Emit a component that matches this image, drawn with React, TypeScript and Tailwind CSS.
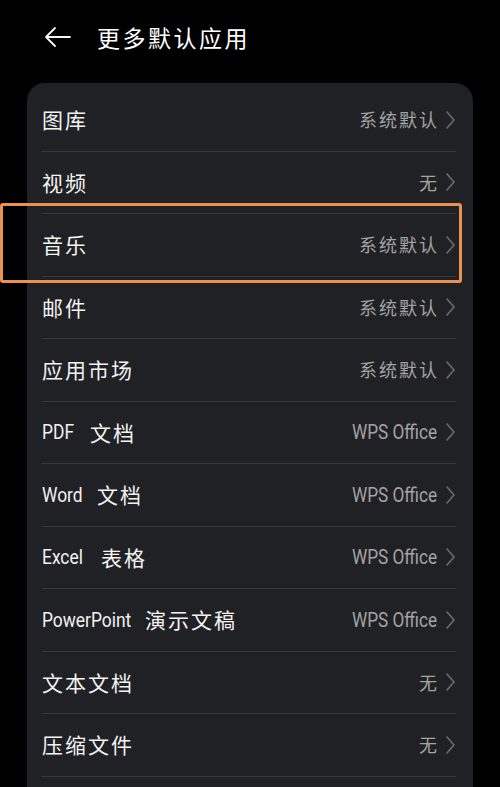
const CJK = { fontFamily: '"Noto Sans CJK SC", "Noto Sans", sans-serif' }
const LATIN = { fontFamily: 'Roboto, "Noto Sans CJK SC", sans-serif' }

// latinW: width the condensed latin word takes in the row
const ROWS: { label: string; value: string; latinW?: string }[] = [
  { label: '图库', value: '系统默认' },
  { label: '视频', value: '无' },
  { label: '音乐', value: '系统默认' },
  { label: '邮件', value: '系统默认' },
  { label: '应用市场', value: '系统默认' },
  { label: 'PDF 文档', value: 'WPS Office', latinW: 'w-[48px]' },
  { label: 'Word 文档', value: 'WPS Office', latinW: 'w-[55px]' },
  { label: 'Excel 表格', value: 'WPS Office', latinW: 'w-[59px]' },
  { label: 'PowerPoint 演示文稿', value: 'WPS Office', latinW: 'w-[103px]' },
  { label: '文本文档', value: '无' },
  { label: '压缩文件', value: '无' },
]

function Label({ text, latinW }: { text: string; latinW?: string }) {
  const [latin, cjk] = latinW ? text.split(' ') : ['', text]
  return (
    <span className="flex items-center text-[#f2f2f2] whitespace-nowrap">
      {latin && (
        <span className={`inline-block shrink-0 ${latinW}`}>
          <span className="inline-block origin-left scale-x-[0.87] text-[20px]" style={LATIN}>{latin}</span>
        </span>
      )}
      <span className="text-[21px] tracking-[2px]" style={CJK}>{cjk}</span>
    </span>
  )
}

function Value({ text }: { text: string }) {
  const isLatin = /^[A-Za-z ]+$/.test(text)
  return isLatin ? (
    <span className="ml-auto inline-block origin-right scale-x-[0.86] text-[20px] text-[#a3a3a3] whitespace-nowrap" style={LATIN}>{text}</span>
  ) : (
    <span className="ml-auto text-[18px] tracking-[2px] -mr-[2px] text-[#a3a3a3] whitespace-nowrap" style={CJK}>{text}</span>
  )
}

function Chevron() {
  return (
    <svg width="11" height="20" viewBox="0 0 11 20" fill="none" stroke="#6b6c6f" strokeWidth="1.6" strokeLinecap="round" strokeLinejoin="round" className="ml-[8px] shrink-0">
      <path d="M2 2l7 8-7 8" />
    </svg>
  )
}

export default function App() {
  return (
    <div className="w-[500px] h-[787px] bg-black overflow-hidden relative" style={CJK}>
      {/* header */}
      <div className="h-[83px] flex items-center pl-[44px] pb-[9px]">
        <svg width="27" height="22" viewBox="0 0 27 22" fill="none" stroke="#f5f5f5" strokeWidth="1.8" strokeLinecap="round" strokeLinejoin="round">
          <path d="M26 11H2M11 2L2 11l9 9" />
        </svg>
        <span className="ml-[26px] text-[23px] tracking-[2.5px] text-white">更多默认应用</span>
      </div>

      {/* list card, continues below the fold */}
      <div className="mx-[27px] bg-[#202124] rounded-[18px] pt-[6px] pb-[40px]">
        {ROWS.map((r) => (
          <div key={r.label} className="h-[62.5px] ml-[15px] mr-[17px] flex items-center border-b border-[#37383b]">
            <Label text={r.label} latinW={r.latinW} />
            <Value text={r.value} />
            <Chevron />
          </div>
        ))}
      </div>

      {/* highlight frame */}
      <div className="absolute left-0 top-[203px] w-[462px] h-[80px] border-[3px] border-[#ee9150] rounded-[3px] pointer-events-none" />
    </div>
  )
}
